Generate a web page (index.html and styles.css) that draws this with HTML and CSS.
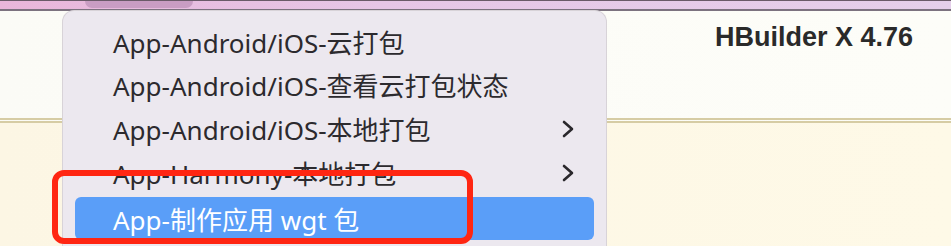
FILE: index.html
```html
<!DOCTYPE html>
<html lang="zh-CN">
<head>
	<meta charset="UTF-8">
	<title>HBuilder X</title>
	<link rel="stylesheet" href="styles.css">
</head>
<body>
	<div class="titlebar">
		<div class="tab"></div>
	</div>
	<div class="header">
		<span class="version">HBuilder X 4.76</span>
	</div>
	<div class="content"></div>

	<ul class="menu">
		<li>App-Android/iOS-云打包</li>
		<li>App-Android/iOS-查看云打包状态</li>
		<li class="sub">App-Android/iOS-本地打包
			<svg class="arrow" width="12" height="18" viewBox="0 0 12 18"><polyline points="2,2 10,9 2,16" fill="none" stroke="#2a282c" stroke-width="2.6" stroke-linecap="round" stroke-linejoin="round"/></svg>
		</li>
		<li class="sub">App-Harmony-本地打包
			<svg class="arrow" width="12" height="18" viewBox="0 0 12 18"><polyline points="2,2 10,9 2,16" fill="none" stroke="#2a282c" stroke-width="2.6" stroke-linecap="round" stroke-linejoin="round"/></svg>
		</li>
		<li class="active">App-制作应用 wgt 包</li>
	</ul>

	<!-- 标注框 -->
	<div class="mark"></div>
</body>
</html>
```

FILE: styles.css
```css
body{
	margin:0;
	width:951px;
	height:246px;
	overflow:hidden;
	font-family:"Noto Sans","Noto Sans CJK SC",sans-serif;
	background-color:#fdf8e6;
}
.titlebar{
	height:8px;
	background:linear-gradient(to right,#e9b6da,#e6c6e6 40%,#e5cfea);
	border-top:1px solid #6a5a68;
	border-bottom:2px solid #7c727f;
	position:relative;
}
.tab{
	position:absolute;
	left:85px;
	top:0;
	width:108px;
	height:7px;
	background-color:#c99dc3;
	border-radius:0 0 8px 8px;
}
.header{
	height:107px;
	background:linear-gradient(to right,#fbfbf6,#fdfdf8);
	border-bottom:5px double #d6cca4;
	display:flex;
	justify-content:flex-end;
	align-items:flex-start;
	padding-right:38px;
}
.version{
	margin-top:11px;
	font-family:"Liberation Sans",sans-serif;
	font-weight:bold;
	font-size:27px;
	color:#2a2a2a;
}
.content{
	height:123px;
	background:linear-gradient(to right,#fcf6e4,#fef9e7);
}
.menu{
	position:absolute;
	left:63px;
	top:11px;
	box-sizing:border-box;
	width:543px;
	height:235px;
	margin:0;
	padding:9px 12px 0;
	list-style:none;
	background-color:#ece8ef;
	border-radius:11px 11px 0 0;
	box-shadow:0 0 0 1px #d8d3d8;
	overflow:hidden;
}
.menu li{
	height:43.6px;
	display:flex;
	align-items:center;
	padding-left:38px;
	padding-right:20px;
	font-size:26px;
	color:#2c2a2e;
	border-radius:6px;
}
.menu li .arrow{
	margin-left:auto;
}
.menu li.active{
	margin-top:3px;
	height:43px;
	background-color:#5a9ef8;
	color:#fff;
}
.mark{
	position:absolute;
	left:52px;
	top:170px;
	width:409px;
	height:62px;
	border:6px solid #ff2612;
	border-radius:12px;
}
```
